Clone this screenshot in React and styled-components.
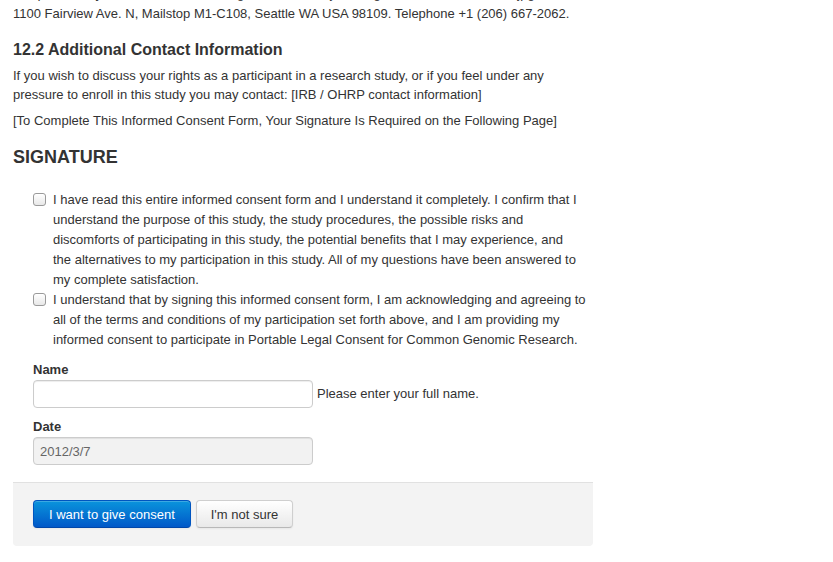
import styled, { createGlobalStyle } from 'styled-components';

const GlobalStyle = createGlobalStyle`
  html, body {
    margin: 0;
    padding: 0;
    background: #fff;
  }
  body {
    font-family: "Liberation Sans", Arial, sans-serif;
    font-size: 13px;
    line-height: 20px;
    color: #333;
    overflow: hidden;
  }
`;

const Page = styled.div`
  width: 580px;
  padding: 0 13px;
  margin-top: -16px;
`;

const Para = styled.p`
  margin: 0 0 ${({ $gap }) => $gap ?? 10}px;
  font-size: 13px;
  line-height: ${({ $lh }) => $lh ?? 20}px;
`;

const SubHeading = styled.h3`
  margin: 15px 0 5px;
  font-size: 16px;
  line-height: 22px;
  font-weight: bold;
  color: #333;
`;

const Heading = styled.h2`
  margin: 15px 0 22px;
  font-size: 18px;
  line-height: 22px;
  font-weight: bold;
  color: #333;
`;

const Form = styled.form`
  margin: 0;
`;

const CheckList = styled.div`
  padding-left: 20px;
  margin-bottom: 11px;
`;

const CheckRow = styled.label`
  display: flex;
  align-items: flex-start;
  gap: 7px;
  font-size: 13px;
  line-height: 20px;
`;

const Box = styled.input.attrs({ type: 'checkbox' })`
  flex: none;
  width: 13px;
  height: 13px;
  margin: 3px 0 0;
  appearance: none;
  border: 1px solid #9a9a9a;
  border-radius: 3px;
  background: linear-gradient(#fff, #e8e8e8);
  box-shadow: inset 0 1px 0 #fff;
`;

const Field = styled.div`
  padding-left: 20px;
  margin-bottom: ${({ $gap }) => $gap}px;
`;

const Label = styled.label`
  display: block;
  font-weight: bold;
  font-size: 13px;
  line-height: 18px;
  margin-bottom: 1px;
`;

const InputRow = styled.div`
  display: flex;
  align-items: center;
  gap: 4px;
`;

const TextInput = styled.input`
  box-sizing: border-box;
  width: 280px;
  height: 28px;
  padding: 4px 6px;
  font-family: inherit;
  font-size: 13px;
  color: ${({ readOnly }) => (readOnly ? '#666' : '#555')};
  background: ${({ readOnly }) => (readOnly ? '#f2f2f2' : '#fff')};
  border: 1px solid #ccc;
  border-radius: 4px;
  box-shadow: inset 0 1px 1px rgba(0, 0, 0, 0.075);
  outline: none;
`;

const Help = styled.span`
  font-size: 13px;
  color: #333;
`;

const Actions = styled.div`
  display: flex;
  gap: 5px;
  padding: 17px 20px 18px;
  background: #f3f3f3;
  border-top: 1px solid #e1e1e1;
  border-radius: 0 0 4px 4px;
`;

const Button = styled.button`
  height: 28px;
  padding: 0 ${({ $primary }) => ($primary ? 15 : 14)}px;
  font-family: inherit;
  font-size: 13px;
  border-radius: 4px;
  cursor: pointer;
  color: ${({ $primary }) => ($primary ? '#fff' : '#333')};
  background: ${({ $primary }) =>
    $primary ? 'linear-gradient(#0a94dc, #0058c8)' : 'linear-gradient(#fff, #e9e9e9)'};
  border: 1px solid ${({ $primary }) => ($primary ? '#0055c0' : '#cfcfcf')};
  border-bottom-color: ${({ $primary }) => ($primary ? '#0046a8' : '#b8b8b8')};
  box-shadow: inset 0 1px 0 rgba(255, 255, 255, 0.2), 0 1px 2px rgba(0, 0, 0, 0.05);
`;

export default function App() {
  return (
    <>
      <GlobalStyle />
      <Page>
        <Para $gap={0}>
          Jacqueline Hoyt, Attention: Portable Legal Consent Project, Sage Bionetworks, Seattle, jpg
        </Para>
        <Para>
          1100 Fairview Ave. N, Mailstop M1-C108, Seattle WA USA 98109. Telephone +1 (206) 667-2062.
        </Para>

        <SubHeading>12.2 Additional Contact Information</SubHeading>
        <Para $lh={19} $gap={7}>
          If you wish to discuss your rights as a participant in a research study, or if you feel under any
          pressure to enroll in this study you may contact: [IRB / OHRP contact information]
        </Para>
        <Para>
          [To Complete This Informed Consent Form, Your Signature Is Required on the Following Page]
        </Para>

        <Heading>SIGNATURE</Heading>

        <Form>
          <CheckList>
            <CheckRow>
              <Box />
              <span>
                I have read this entire informed consent form and I understand it completely. I confirm that I
                understand the purpose of this study, the study procedures, the possible risks and
                discomforts of participating in this study, the potential benefits that I may experience, and<br />
                the alternatives to my participation in this study. All of my questions have been answered to<br />
                my complete satisfaction.
              </span>
            </CheckRow>
            <CheckRow>
              <Box />
              <span>
                I understand that by signing this informed consent form, I am acknowledging and agreeing to
                all of the terms and conditions of my participation set forth above, and I am providing my
                informed consent to participate in Portable Legal Consent for Common Genomic Research.
              </span>
            </CheckRow>
          </CheckList>

          <Field $gap={10}>
            <Label>Name</Label>
            <InputRow>
              <TextInput type="text" />
              <Help>Please enter your full name.</Help>
            </InputRow>
          </Field>

          <Field $gap={17}>
            <Label>Date</Label>
            <InputRow>
              <TextInput type="text" value="2012/3/7" readOnly />
            </InputRow>
          </Field>

          <Actions>
            <Button type="button" $primary>I want to give consent</Button>
            <Button type="button">I'm not sure</Button>
          </Actions>
        </Form>
      </Page>
    </>
  );
}
